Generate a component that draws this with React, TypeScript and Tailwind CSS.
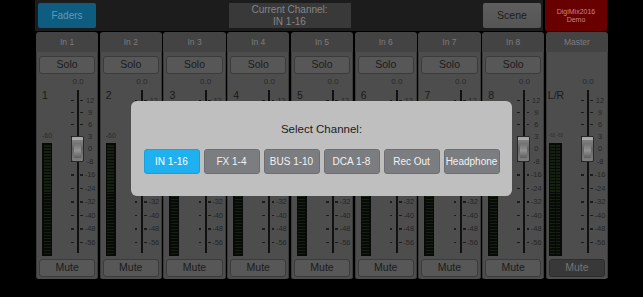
import React from "react";

const ticks = ["12", "9", "6", "3", "0", "-8", "-16", "-24", "-32", "-40", "-48", "-56"];
const channels = ["1", "2", "3", "4", "5", "6", "7", "8"];
const choices = ["IN 1-16", "FX 1-4", "BUS 1-10", "DCA 1-8", "Rec Out", "Headphone"];

const ScaleRow = ({ label, h }: { label?: string; h: string }) => (
  <div className={`flex items-center ${h}`}>
    <span className={`w-[2.6px] h-[1.5px] ${label ? "bg-[#1c1c1c]" : ""}`} />
    <span className="w-[3.4px]" />
    <span className="w-[2px] self-stretch bg-[#111]" />
    <span className="w-[1.3px]" />
    <span className={`w-[2.7px] h-[1.5px] ${label ? "bg-[#1c1c1c]" : ""}`} />
    {label && (
      <span className="w-[14px] text-center text-[7.5px] leading-none text-[#262626]">{label}</span>
    )}
  </div>
);

const Fader = () => (
  <div className="relative flex flex-col">
    <div className="w-[14px] h-[16px] flex items-center justify-center text-[8px] text-[#2a2a2a]">0.0</div>
    <ScaleRow h="h-[4.7px]" />
    {ticks.slice(0, 5).map((t) => (
      <ScaleRow key={t} label={t} h="h-[12px]" />
    ))}
    {ticks.slice(5).map((t) => (
      <ScaleRow key={t} label={t} h="h-[13.5px]" />
    ))}
    <ScaleRow h="h-[3.8px]" />
    {/* fader cap */}
    <div className="absolute left-0 top-[61.7px] w-[13px] h-[26px] rounded-[2px] border border-[#2a2a2a] bg-gradient-to-b from-[#8a8a8a] via-[#656565] to-[#7e7e7e] flex flex-col">
      <div className="h-[3px] bg-[#a8a8a8] rounded-t-[1px]" />
      <div className="flex-1 mx-[2px] my-[3px] rounded-[1px] bg-gradient-to-b from-[#707070] via-[#929292] to-[#5e5e5e]" />
    </div>
  </div>
);

const Meter = () => (
  <div className="w-[10px] h-[113px] bg-[#070a07] p-[1.5px] flex">
    <div className="flex-1 bg-[repeating-linear-gradient(to_bottom,#142010_0px,#142010_1.5px,#070a07_1.5px,#070a07_3px)]" />
  </div>
);

const MasterMeter = () => (
  <div className="w-[13px] h-[113px] bg-[#070a07] p-[1.5px] flex gap-[1px]">
    <div className="flex-1 bg-[repeating-linear-gradient(to_bottom,#142010_0px,#142010_1.5px,#070a07_1.5px,#070a07_3px)]" />
    <div className="flex-1 bg-[repeating-linear-gradient(to_bottom,#142010_0px,#142010_1.5px,#070a07_1.5px,#070a07_3px)]" />
  </div>
);

const Strip = ({ num }: { num: string }) => (
  <div className="flex flex-col rounded-[3px] overflow-hidden">
    <div className="h-[20px] bg-[#434343] flex items-center justify-center text-[8.5px] text-[#7c7c7c]">
      In {num}
    </div>
    <div className="bg-[#4d4d4d] flex flex-col pb-[2px] border-x border-[#3a3a3a]">
      <div className="mt-[4px] mx-[2px] h-[18px] rounded-[3px] bg-[#575757] border border-[#3b3b3b] flex items-center justify-center text-[10.5px] text-[#1b1b1b]">
        Solo
      </div>
      <div className="h-[183px] flex">
        <div className="w-[34.7px] pl-[5px] flex flex-col">
          <div className="mt-[15px] h-[12px] text-[10.5px] leading-[12px] text-[#1a1a1a]">{num}</div>
          <div className="mt-[31px] h-[8px] text-[7px] leading-[8px] text-[#2a2a2a]">-60</div>
          <div className="mt-[3px]">
            <Meter />
          </div>
        </div>
        <Fader />
      </div>
      <div className="mt-[2px] mx-[2px] h-[18px] rounded-[3px] bg-[#575757] border border-[#3b3b3b] flex items-center justify-center text-[10.5px] text-[#1b1b1b]">
        Mute
      </div>
    </div>
  </div>
);

const MasterStrip = () => (
  <div className="flex flex-col rounded-[3px] overflow-hidden">
    <div className="h-[20px] bg-[#434343] flex items-center justify-center text-[8.5px] text-[#7c7c7c]">
      Master
    </div>
    <div className="bg-[#4d4d4d] flex flex-col pb-[2px] border-x border-[#3a3a3a]">
      <div className="mt-[4px] h-[18px]" />
      <div className="h-[183px] flex">
        <div className="w-[34.7px] pl-[1px] flex flex-col">
          <div className="mt-[15px] h-[12px] text-[10.5px] leading-[12px] text-[#1a1a1a]">L/R</div>
          <div className="mt-[31px] h-[8px] text-[4.5px] leading-[8px] text-[#2e2e2e] pl-[1px]">-60 -60</div>
          <div className="mt-[3px] pl-[1px]">
            <MasterMeter />
          </div>
        </div>
        <Fader />
      </div>
      <div className="mt-[2px] mx-[2px] h-[18px] rounded-[3px] bg-[#383838] border border-[#2c2c2c] flex items-center justify-center text-[10.5px] text-[#737373]">
        Mute
      </div>
    </div>
  </div>
);

export default function App() {
  return (
    <div className="relative w-[643px] h-[297px] bg-black overflow-hidden font-['Liberation_Sans',Arial,sans-serif]">
      <div className="ml-[35px] w-[573px] flex flex-col">
        <div className="h-[31px] flex gap-[2px]">
          <div className="w-[508px] bg-[#1c1c1c] flex items-center justify-between pl-[3px] pr-[2px]">
            <div className="w-[58px] h-[25px] rounded-[2px] bg-[#0e5d80] flex items-center justify-center text-[10px] text-[#5d9bb8]">
              Faders
            </div>
            <div className="w-[122px] h-[25px] bg-[#393939] flex flex-col items-center justify-center text-[10px] leading-[11.5px] text-[#858585]">
              <span>Current Channel:</span>
              <span>IN 1-16</span>
            </div>
            <div className="w-[58px] h-[25px] rounded-[2px] bg-gradient-to-b from-[#5e5e5e] to-[#555] flex items-center justify-center text-[10.5px] text-[#1c1c1c]">
              Scene
            </div>
          </div>
          <div className="w-[62px] bg-[#690000] rounded-b-[2px] flex flex-col items-center justify-center text-[7px] leading-[8px] text-[#c98585]">
            <span>DigiMix2016</span>
            <span>Demo</span>
          </div>
        </div>
        <div className="mt-[1px] ml-[1px] grid grid-cols-9 gap-[1.6px]">
          {channels.map((c) => (
            <Strip key={c} num={c} />
          ))}
          <MasterStrip />
        </div>
      </div>

      {/* channel picker dialog */}
      <div className="absolute left-[131px] top-[101px] w-[381px] h-[95px] rounded-[6px] bg-[#bfbfbf] flex flex-col items-center">
        <div className="mt-[21px] text-[11.5px] leading-[15px] text-[#1c1c1c]">Select Channel:</div>
        <div className="mt-[12px] flex gap-[4px]">
          {choices.map((c, i) => (
            <div
              key={c}
              className={`w-[56px] h-[25px] rounded-[3px] border flex items-center justify-center text-[10px] ${
                i === 0 ? "bg-[#1fb0f0] border-[#1aa0dc] text-white" : "bg-[#7b7d80] border-[#6c6e71] text-[#f2f2f2]"
              }`}
            >
              {c}
            </div>
          ))}
        </div>
      </div>
    </div>
  );
}
